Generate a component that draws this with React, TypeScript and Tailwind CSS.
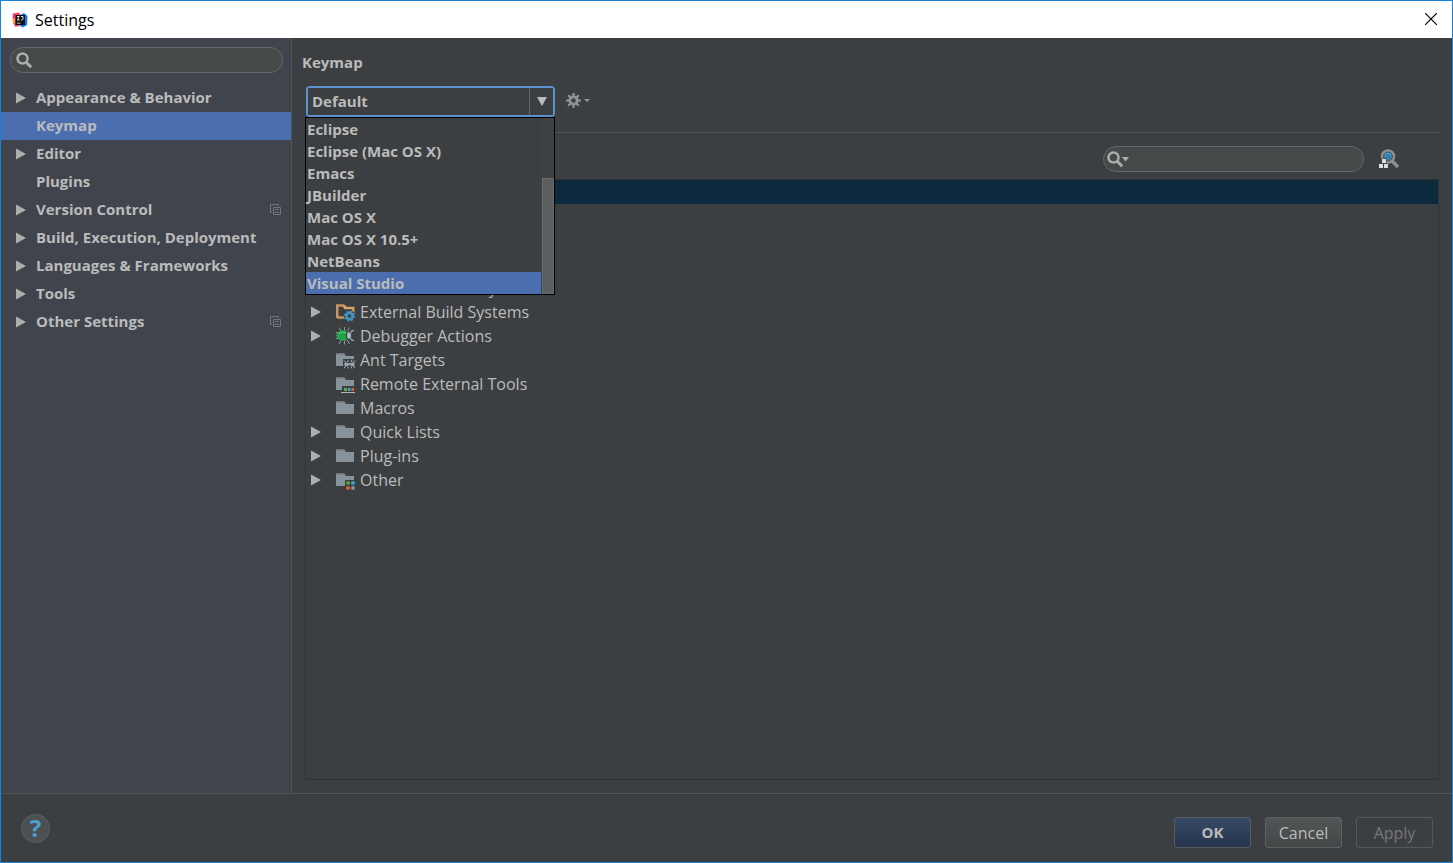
import type { ReactNode } from "react";

type Category = {
  label: string;
  expandable?: boolean;
  selected?: boolean;
  project?: boolean;
};

type TreeRow = {
  label: string;
  expandable?: boolean;
  icon: ReactNode;
};

const categories: Category[] = [
  { label: "Appearance & Behavior", expandable: true },
  { label: "Keymap", selected: true },
  { label: "Editor", expandable: true },
  { label: "Plugins" },
  { label: "Version Control", expandable: true, project: true },
  { label: "Build, Execution, Deployment", expandable: true },
  { label: "Languages & Frameworks", expandable: true },
  { label: "Tools", expandable: true },
  { label: "Other Settings", expandable: true, project: true },
];

const keymaps = [
  "Eclipse",
  "Eclipse (Mac OS X)",
  "Emacs",
  "JBuilder",
  "Mac OS X",
  "Mac OS X 10.5+",
  "NetBeans",
  "Visual Studio",
];

const Arrow = () => (
  <svg width="10" height="12" viewBox="0 0 10 12" className="shrink-0" aria-hidden="true">
    <path d="M0 0.5 10 6 0 11.5z" fill="#adadad" />
  </svg>
);

const IdeaLogo = () => (
  <svg width="16" height="16" viewBox="0 0 16 16" aria-hidden="true">
    <path d="M1 1.5 7 .5 9 4 5 13 1 11.5 2 8 .5 6z" fill="#fc3c68" />
    <path d="M.5 7.5 3 6v7L1 12z" fill="#f9a13a" />
    <path d="M2 11h4l2 3-5 .8z" fill="#e0406f" />
    <path d="m9 2.5 3-1.5 3.500 3-.5 9-4 2.500-3-1.500z" fill="#087cfa" />
    <path d="M3.500 3h9.500v10H3.500z" fill="#111" />
    <path d="M5 4.500h2.500M6.250 4.500v3.500M5 8h2.500M9 4.500h2V7q0 1-1.500 1H9" stroke="#ddd" fill="none" />
    <path d="M5 11.200h3.500" stroke="#bbb" />
  </svg>
);

const SearchIcon = () => (
  <svg width="17" height="17" viewBox="0 0 17 17" fill="none" stroke="#adadad" aria-hidden="true">
    <circle cx="6.500" cy="6.500" r="5" strokeWidth="2.500" />
    <path d="m10.200 10.200 5 5" strokeWidth="3" />
  </svg>
);

const ProjectIcon = () => (
  <svg width="11" height="11" viewBox="0 0 11 11" fill="none" stroke="#6f757d" aria-label="For current project">
    <path d="M2 8.500H.5V.5h8V2" />
    <path d="M3.500 3.500h7v7h-7z" />
    <path d="M5 5.500h4M5 8.500h4" />
  </svg>
);

const Folder = ({ children }: { children?: ReactNode }) => (
  <svg width="20" height="20" viewBox="0 0 20 20" className="shrink-0" aria-hidden="true">
    <path d="M0 3h8l2 3h8v10H0z" fill="#87939a" />
    <path d="M0 3h8l1 1.500H0z" fill="#6d777d" />
    {children}
  </svg>
);

const BuildFolder = () => (
  <svg width="20" height="20" viewBox="0 0 20 20" className="shrink-0" aria-hidden="true">
    <path d="M1.250 16V3.500h6l2 2.500h8v5M1.250 15.500h7" fill="none" stroke="#c8965a" strokeWidth="2.500" />
    <path d="M7 3h2l1.500 2H18v2H8z" fill="#d5a469" />
    <circle cx="13.500" cy="14" r="5.800" fill="#3c3f41" />
    <circle cx="13.500" cy="14" r="3.100" fill="none" stroke="#4592bd" strokeWidth="2.800" />
    <circle cx="13.500" cy="14" r="4.700" fill="none" stroke="#4592bd" strokeWidth="1.600" strokeDasharray="2 1.691" />
  </svg>
);

const Bug = () => (
  <svg width="20" height="20" viewBox="0 0 20 20" className="shrink-0" aria-hidden="true">
    <g fill="none" stroke="#8c9aa0">
      <path d="M3 1.500 5 5M8.500 1v4M13.500 1.500 11 6M3 18l2-3.500M8.500 18.500v-4M13.500 18 11 13.500M0 6.500h4M0 12.500h4M0 9.500h3" />
      <path d="M18 4.500q-3.500 0-3.500 3.500M18 14.500q-3.500 0-3.500-3.500" strokeWidth="1.400" />
    </g>
    <ellipse cx="7" cy="9.500" rx="6.500" ry="5.200" fill="#22a347" />
    <path d="M2 8q4-3.500 9-1" stroke="#5cc977" fill="none" />
    <path d="M11 5q4 1 4 4.500t-4 4.500q-2.500-4.500 0-9" fill="#3c3f41" />
    <path d="M12 6q3 1 3 3.500T12 13q-2-3.500 0-7" fill="#b5bcbf" />
  </svg>
);

const tree: TreeRow[] = [
  { label: "Version Control Systems", expandable: true, icon: <Folder /> },
  { label: "External Build Systems", expandable: true, icon: <BuildFolder /> },
  { label: "Debugger Actions", expandable: true, icon: <Bug /> },
  {
    label: "Ant Targets",
    icon: (
      <Folder>
        <path d="M7 9h12v10H7z" fill="#3c3f41" />
        <g stroke="#a4afb5" fill="none">
          <path d="M8 10.500 10 12.500M12 10v2M16 10l-1 2M19 10.500l-2 2M8 18l2-2M12 18.500v-2M16 18.500l-1-2M19 18l-2-2" />
        </g>
        <path d="M8.500 12.500h3l1 .8h2l1-.8h3v3.500h-3l-1-.8h-2l-1 .8h-3z" fill="#9aa7ae" />
      </Folder>
    ),
  },
  {
    label: "Remote External Tools",
    icon: (
      <Folder>
        <path d="M6 12h13v8H6z" fill="#3c3f41" />
        <path d="M8 14h3v3H8z" fill="#5fb13f" />
        <path d="M12 14h2.500v3H12z" fill="#3ba7d8" />
        <path d="M15.500 14H18v3h-2.500z" fill="#e2622b" />
        <path d="M5 18.500h14" stroke="#b0b7ba" />
      </Folder>
    ),
  },
  { label: "Macros", icon: <Folder /> },
  { label: "Quick Lists", expandable: true, icon: <Folder /> },
  { label: "Plug-ins", expandable: true, icon: <Folder /> },
  {
    label: "Other",
    expandable: true,
    icon: (
      <Folder>
        <path d="M9 10h11v10H9z" fill="#3c3f41" />
        <circle cx="12" cy="13" r="2.100" fill="#5a9e3c" />
        <circle cx="17" cy="13" r="2.100" fill="#3c9fc9" />
        <circle cx="12" cy="18" r="2" fill="#d95f27" />
        <circle cx="17" cy="18" r="2" fill="#87939a" />
      </Folder>
    ),
  },
];

const TitleBar = () => (
  <header className="flex h-[37px] items-center bg-white pl-[11px] pr-[14px] text-black">
    <IdeaLogo />
    <h1 className="ml-[7px] flex-1 text-base">Settings</h1>
    <button type="button" aria-label="Close" className="px-px pb-[2px]">
      <svg width="12" height="12" viewBox="0 0 12 12" stroke="#000" strokeWidth="1.200">
        <path d="m0 0 12 12M12 0 0 12" />
      </svg>
    </button>
  </header>
);

const Sidebar = () => (
  <aside className="w-[291px] shrink-0 border-r border-[#515457] bg-[#40444d] pt-[9px]">
    <label className="ml-[9px] mr-2 flex h-[26px] items-center rounded-full border border-[#646667] bg-[#45494a] pl-[5px] pr-3">
      <SearchIcon />
      <input type="text" aria-label="Search settings" className="ml-1 min-w-0 flex-1 bg-transparent outline-none" />
    </label>
    <ul className="mt-[11px] text-[15px] font-bold">
      {categories.map((item) => (
        <li
          key={item.label}
          className={`flex h-7 items-center pb-px pl-[15px] pr-[10px] ${item.selected ? "bg-[#4b6eaf]" : ""}`}
        >
          <span className="w-5 shrink-0">{item.expandable && <Arrow />}</span>
          <span className="flex-1 whitespace-nowrap">{item.label}</span>
          {item.project && <ProjectIcon />}
        </li>
      ))}
    </ul>
  </aside>
);

const KeymapSelect = () => (
  <div className="relative h-[31px] w-[249px] rounded-sm border-2 border-[#5c93cf] text-[15px] font-bold">
    <select
      aria-label="Keymap"
      defaultValue="Default"
      className="h-full w-full appearance-none bg-[#3c3f41] pl-1 outline-none"
    >
      <option>Default</option>
      {keymaps.map((name) => (
        <option key={name}>{name}</option>
      ))}
    </select>
    <span className="pointer-events-none absolute inset-y-0 right-0 flex w-6 items-center justify-center border-l border-[#646667]">
      <svg width="10" height="9" viewBox="0 0 10 9" aria-hidden="true">
        <path d="M0 0h10L5 9z" fill="#bbb" />
      </svg>
    </span>
    <div className="absolute -left-[3px] top-[29px] z-10 flex w-[250px] border border-black bg-[#3c3f41]">
      <ul role="listbox" aria-label="Keymaps" className="flex-1">
        {keymaps.map((name) => (
          <li
            key={name}
            role="option"
            aria-selected={name === "Visual Studio"}
            className={`h-[22px] pl-px leading-[22px] ${name === "Visual Studio" ? "bg-[#4b6eaf]" : ""}`}
          >
            {name}
          </li>
        ))}
      </ul>
      <div className="flex w-[13px] flex-col justify-end bg-[#3f4244] pl-px">
        <div className="h-[116px] border border-[#696b6c] bg-[#5b5e5f]" />
      </div>
    </div>
  </div>
);

const KeymapPage = () => (
  <main className="flex min-w-0 flex-1 flex-col pb-[13px] pl-[13px] pr-[13px]">
    <h2 className="-ml-[3px] mt-3 h-6 text-[15px] font-bold leading-6">Keymap</h2>
    <div className="mt-3 flex items-center gap-[11px] pl-px">
      <KeymapSelect />
      <button type="button" aria-label="Keymap actions" className="flex items-center gap-[3px] pb-[2px]">
        <svg width="15" height="15" viewBox="0 0 15 15" fill="none" stroke="#929496" aria-hidden="true">
          <circle cx="7.500" cy="7.500" r="3.700" strokeWidth="2.800" />
          <path
            d="M7.500 0v3M7.500 12v3M0 7.500h3M12 7.500h3M2.200 2.200l2.100 2.100M10.700 10.700l2.100 2.100M12.800 2.200l-2.100 2.100M4.300 10.700l-2.100 2.100"
            strokeWidth="2.200"
          />
        </svg>
        <svg width="6" height="3" viewBox="0 0 6 3" aria-hidden="true">
          <path d="M0 0h6L3 3z" fill="#929496" />
        </svg>
      </button>
    </div>
    <div className="mt-[15px] flex h-[47px] items-center justify-end border-t border-[#515354] pr-10 pt-[6px]">
      <label className="flex h-[26px] w-[261px] items-center rounded-full border border-[#646667] bg-[#45494a] pl-[3px] pr-3">
        <SearchIcon />
        <svg width="7" height="5" viewBox="0 0 7 5" className="-ml-[2px]" aria-hidden="true">
          <path d="M0 0h7L3.500 4.500z" fill="#adadad" />
        </svg>
        <input type="text" aria-label="Search actions" className="ml-1 min-w-0 flex-1 bg-transparent outline-none" />
      </label>
      <button type="button" aria-label="Find actions by shortcut" className="ml-[15px]">
        <svg width="20" height="20" viewBox="0 0 20 20" aria-hidden="true">
          <path d="m13 12 6 6" stroke="#8e8e8e" strokeWidth="3.500" />
          <circle cx="9" cy="7.500" r="6" fill="#25384a" stroke="#8e8e8e" strokeWidth="2.500" />
          <circle cx="9" cy="7.500" r="4.200" fill="#3b80a8" />
          <path d="M6 5.500q3-2.500 6 0" stroke="#5fa8cf" fill="none" />
          <path d="M2 9h6v6H2z" fill="#3c3f41" opacity=".5" />
          <path d="M3 10h4v4H3zM0 15h4v4H0zM5 15h4v4H5z" fill="#dcdcdc" />
        </svg>
      </button>
    </div>
    <ul className="flex-1 border border-[#323232]">
      <li className="h-6 bg-[#0d293e]" />
      {/* rows covered by the open popup */}
      <li className="h-[72px]" />
      {tree.map((row) => (
        <li key={row.label} className="flex h-6 items-center pl-[5px]">
          <span className="w-[25px] shrink-0">{row.expandable && <Arrow />}</span>
          {row.icon}
          <span className="ml-1 whitespace-nowrap">{row.label}</span>
        </li>
      ))}
    </ul>
  </main>
);

const Footer = () => (
  <footer className="flex h-[69px] items-center border-t border-[#515354] pl-5 pr-[19px]">
    <button
      type="button"
      aria-label="Help"
      className="h-[29px] w-[29px] rounded-full border border-[#5d6061] bg-[#4b5052] text-2xl font-bold leading-[26px] text-[#4e9fcb]"
    >
      ?
    </button>
    <div className="ml-auto mt-[9px] flex gap-[14px]">
      <button
        type="button"
        className="h-[31px] w-[77px] rounded-[3px] border border-[#595c5e] bg-linear-to-b from-[#364a67] to-[#27354d] text-[15px] font-bold"
      >
        OK
      </button>
      <button
        type="button"
        className="h-[31px] w-[77px] rounded-[3px] border border-[#5f6263] bg-linear-to-b from-[#525657] to-[#434748]"
      >
        Cancel
      </button>
      <button type="button" disabled className="h-[31px] w-[77px] rounded-[3px] border border-[#56595a] text-[#777]">
        Apply
      </button>
    </div>
  </footer>
);

export default function App() {
  return (
    <div className="flex min-h-screen flex-col border border-[#1883d7] bg-[#3c3f41] font-['Open_Sans','Noto_Sans',sans-serif] text-base text-[#bbbbbb]">
      <TitleBar />
      <div className="flex flex-1">
        <Sidebar />
        <KeymapPage />
      </div>
      <Footer />
    </div>
  );
}
